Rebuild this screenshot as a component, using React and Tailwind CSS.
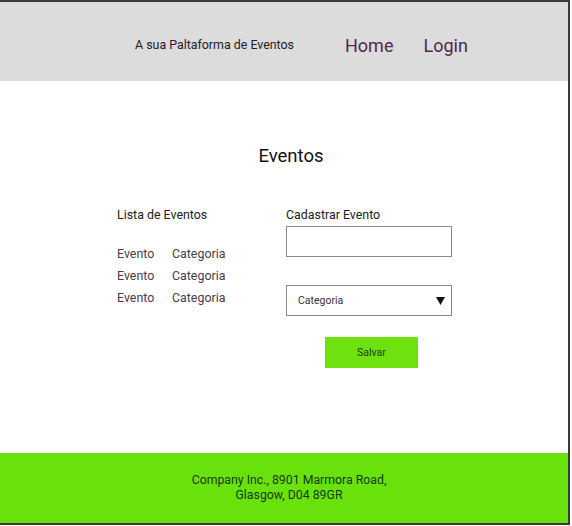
import React from "react";

const rows = ["Evento", "Evento", "Evento"];

export default function App() {
  return (
    <div className="w-[570px] h-[525px] border-t-2 border-r-2 border-b-2 border-[#3a3a3a] flex flex-col bg-white font-['Roboto',sans-serif]">
      {/* header */}
      <header className="h-[79px] bg-[#dcdcdc] flex items-center pl-[135px] shrink-0">
        <span className="text-[12.4px] text-[#222] mt-[7px]">A sua Paltaforma de Eventos</span>
        <nav className="flex gap-[30px] ml-[51px] text-[18px] text-[#4e2a48] mt-[7px]">
          <a href="#">Home</a>
          <a href="#">Login</a>
        </nav>
      </header>

      <main className="flex-1 flex flex-col">
        <h1 className="text-[18.5px] text-[#111] text-center mt-[62px] pl-[14px]">Eventos</h1>

        <div className="flex mt-[35px] pl-[117px]">
          <section className="w-[169px]">
            <h2 className="text-[12.4px] text-[#222]">Lista de Eventos</h2>
            <ul className="mt-[22px] flex flex-col gap-[6px] text-[12.4px] text-[#4d3b4b]">
              {rows.map((r, i) => (
                <li key={i} className="flex leading-[16px]">
                  <span className="w-[55px]">{r}</span>
                  <span>Categoria</span>
                </li>
              ))}
            </ul>
          </section>

          <section className="w-[166px] flex flex-col">
            <h2 className="text-[12.4px] text-[#222]">Cadastrar Evento</h2>
            <input className="mt-[2px] h-[31px] border border-[#8a8a8a] outline-none" />
            <div className="mt-[28px] h-[31px] border border-[#8a8a8a] flex items-center justify-between pl-[11px] pr-[6px]">
              <span className="text-[10.5px] text-[#3d2f3c]">Categoria</span>
              <svg width="9" height="8" viewBox="0 0 9 8">
                <path d="M0 0 L9 0 L4.5 8 Z" fill="#111" />
              </svg>
            </div>
            <button className="mt-[21px] ml-[39px] w-[93px] h-[31px] bg-[#6ee20e] text-[10.5px] text-[#1f3a10]">
              Salvar
            </button>
          </section>
        </div>
      </main>

      <footer className="h-[70px] bg-[#69e20c] shrink-0 flex items-center justify-center pl-[10px] text-center text-[12.3px] leading-[15px] text-[#173a0a]">
        <p>
          Company Inc., 8901 Marmora Road,
          <br />
          Glasgow, D04 89GR
        </p>
      </footer>
    </div>
  );
}
